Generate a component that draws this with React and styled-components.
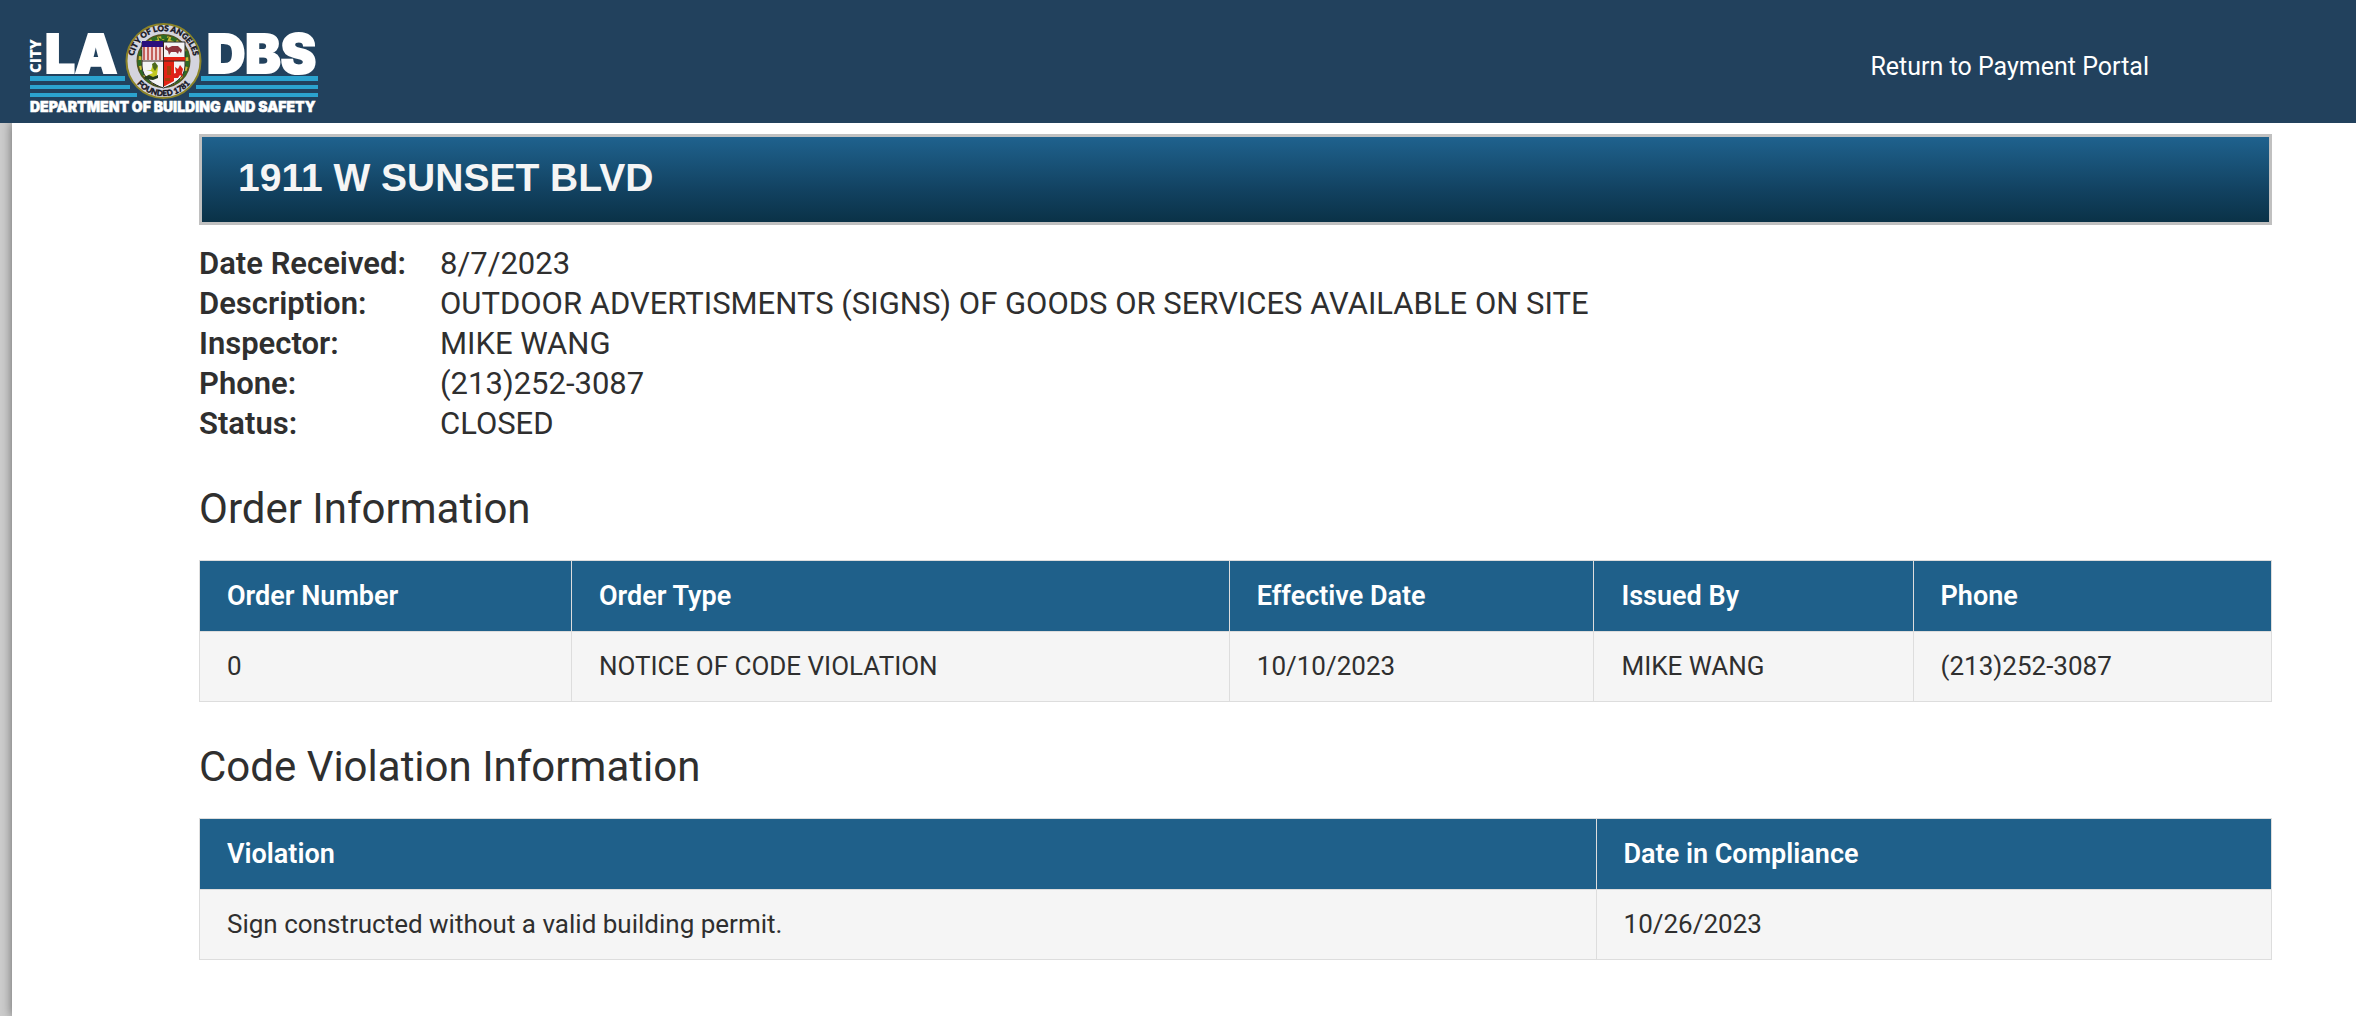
import React from "react"
import styled, { createGlobalStyle } from "styled-components"

const GlobalStyle = createGlobalStyle`
  * {
    box-sizing: border-box;
  }
  body {
    margin: 0;
    background-color: #ccc;
    color: #2f2f2f;
    font-family: Roboto, "Liberation Sans", sans-serif;
  }
`

const Layout = styled.div`
  min-height: 100vh;
  display: flex;
  flex-direction: column;
`
const Header = styled.header`
  position: relative;
  display: flex;
  justify-content: space-between;
  align-items: center;
  height: 123px;
  padding: 11px 207px 0 20px;
  background-color: #22415d;
`
const LogoLink = styled.a`
  display: block;
  line-height: 0;
`
const PortalLink = styled.a`
  color: #fff;
  font-size: 25px;
  line-height: 32px;
  text-decoration: none;
`
const Page = styled.main`
  flex: 1;
  margin-left: 12px;
  padding: 11px 84px 56px 187px;
  background-color: #fff;
  box-shadow: 0 0 10px rgba(0, 0, 0, 0.5);
  clip-path: inset(0 0 0 -12px);
`
const Banner = styled.h1`
  margin: 0;
  padding: 17px 36px 20px;
  border: 3px solid #c0c0c0;
  background: linear-gradient(#1f628e 0%, #124261 62%, #0a3247 100%);
  color: #f5f5f5;
  font-family: "Liberation Sans", Arial, sans-serif;
  font-size: 39px;
  line-height: 48px;
`
const Details = styled.dl`
  display: grid;
  grid-template-columns: 241px 1fr;
  margin: 19px 0 0;
  font-size: 31px;
  line-height: 40px;
`
const Label = styled.dt`
  font-weight: 600;
`
const Value = styled.dd`
  margin: 0;
`
const SectionTitle = styled.h2`
  margin: 41px 0 27px;
  font-size: 42px;
  font-weight: 400;
  line-height: 48px;
`
const Table = styled.table`
  width: 100%;
  table-layout: fixed;
  border-collapse: collapse;
  text-align: left;
`
const Th = styled.th`
  width: ${({ $width }) => $width};
  padding: 20px 27px;
  border: 1px solid #ddd;
  background-color: #1f608a;
  color: #fff;
  font-size: 27px;
  font-weight: 600;
  line-height: 30px;
`
const Td = styled.td`
  padding: 20px 27px;
  border: 1px solid #ddd;
  background-color: #f5f5f5;
  font-size: 26px;
  line-height: 29px;
`

const details = [
  ["Date Received:", "8/7/2023"],
  ["Description:", "OUTDOOR ADVERTISMENTS (SIGNS) OF GOODS OR SERVICES AVAILABLE ON SITE"],
  ["Inspector:", "MIKE WANG"],
  ["Phone:", "(213)252-3087"],
  ["Status:", "CLOSED"],
]

const orderColumns = [
  { title: "Order Number", width: "17.95%" },
  { title: "Order Type", width: "31.75%" },
  { title: "Effective Date", width: "17.6%" },
  { title: "Issued By", width: "15.4%" },
  { title: "Phone", width: "17.3%" },
]
const orders = [
  ["0", "NOTICE OF CODE VIOLATION", "10/10/2023", "MIKE WANG", "(213)252-3087"],
]

const violationColumns = [
  { title: "Violation", width: "67.4%" },
  { title: "Date in Compliance", width: "32.6%" },
]
const violations = [
  ["Sign constructed without a valid building permit.", "10/26/2023"],
]

const Logo = () => (
  <svg width="310" height="100" viewBox="20 17 310 100" role="img" aria-label="LADBS">
    <defs>
      <path id="sealTop" d="M133.5 61a30 30 0 0 1 60 0" />
      <path id="sealBottom" d="M128.5 61a35 35 0 0 0 70 0" />
    </defs>
    <g fill="#fff" fontFamily="Inter, sans-serif" fontWeight="900">
      <text transform="translate(41 73) rotate(-90)" fontSize="15" fontFamily="'Open Sans', sans-serif">CITY</text>
      <g fontSize="53" stroke="#fff" strokeWidth="2">
        <text x="45" y="73">LA</text>
        <text x="207" y="73">DBS</text>
      </g>
      <text x="30" y="112" fontSize="14" stroke="#fff" strokeWidth="0.5">DEPARTMENT OF BUILDING AND SAFETY</text>
    </g>
    <g fill="#2ba3cf">
      <path d="M30 76h95v5H30zM30 85h100v4H30zM30 93h107v4H30z" />
      <path d="M201 76h117v5H201zM196 85h122v4H196zM189 93h129v4H189z" />
    </g>
    {/* city seal */}
    <circle cx="163.5" cy="61" r="37" fill="#d4d4de" stroke="#8c8428" strokeWidth="2" />
    <circle cx="163.5" cy="61" r="26" fill="#c8bc34" stroke="#55521c" strokeWidth="2" />
    <circle cx="163.5" cy="61" r="24" fill="none" stroke="#2e6b25" strokeWidth="4" strokeDasharray="6 4" />
    <g fill="#14141e" stroke="#14141e" strokeWidth="0.4" fontFamily="Lato, sans-serif" fontSize="8" fontWeight="900" textAnchor="middle">
      <text><textPath href="#sealTop" startOffset="50%">CITY OF LOS ANGELES</textPath></text>
      <text><textPath href="#sealBottom" startOffset="50%">FOUNDED 1781</textPath></text>
    </g>
    <path d="M158 37l5 3 6-3-2 5h-7z" fill="#26601f" />
    <path d="M142 42h43v24c0 12-12 19-21.5 22C154 85 142 78 142 66z" fill="#f4f4f4" stroke="#26262a" />
    <path d="M142.5 42h20.5v18h-20.5z" fill="#efd5d5" />
    <path d="M144 47v13M148 47v13M152 47v13M156 47v13M160 47v13" stroke="#c4615d" strokeWidth="2" />
    <path d="M142 41h21v6h-21z" fill="#28107c" />
    <path d="M166 45l2 3 4-2h6l4 4-1 3-2-2-1 3-2-2-5 0-2 3-1-4-3-2z" fill="#8e333c" />
    <path d="M163 57h22v4h-11v20l-11 6z" fill="#e42214" />
    <path d="M167 66h4v9h-4zM165 78h5v3h-5z" fill="#a3400c" />
    <path d="M175 67l3 2 2-4 3 4-1 4 1 4-3-2-2 3-4 0-2-4 4-1z" fill="#dc211b" />
    <path d="M146 71l5-1 2-6 5 3-1 8-4 4h-7l2-4 5-2-2-2z" fill="#c2ca22" />
    <path d="M144 77l5-2 4 2 5-2v3l-5 2-8-1z" fill="#253c1c" />
    <path d="M152 64l3-2 3 4-3 5-2-3z" fill="#4e691c" />
    <path d="M163.5 42v45M142 61h43" stroke="#37241c" strokeWidth="1" />
  </svg>
)

const DataTable = ({ label, columns, rows }) => (
  <Table aria-label={label}>
    <thead>
      <tr>
        {columns.map(({ title, width }) => (
          <Th key={title} scope="col" $width={width}>{title}</Th>
        ))}
      </tr>
    </thead>
    <tbody>
      {rows.map(row => (
        <tr key={row[0]}>
          {row.map((cell, i) => (
            <Td key={columns[i].title}>{cell}</Td>
          ))}
        </tr>
      ))}
    </tbody>
  </Table>
)

const App = () => (
  <>
    <GlobalStyle />
    <Layout>
      <Header>
        <LogoLink href="#">
          <Logo />
        </LogoLink>
        <PortalLink href="#">Return to Payment Portal</PortalLink>
      </Header>
      <Page>
        <Banner>1911 W SUNSET BLVD</Banner>
        <Details>
          {details.map(([label, value]) => (
            <React.Fragment key={label}>
              <Label>{label}</Label>
              <Value>{value}</Value>
            </React.Fragment>
          ))}
        </Details>
        <SectionTitle>Order Information</SectionTitle>
        <DataTable label="Order Information" columns={orderColumns} rows={orders} />
        <SectionTitle>Code Violation Information</SectionTitle>
        <DataTable label="Code Violation Information" columns={violationColumns} rows={violations} />
      </Page>
    </Layout>
  </>
)
export default App
